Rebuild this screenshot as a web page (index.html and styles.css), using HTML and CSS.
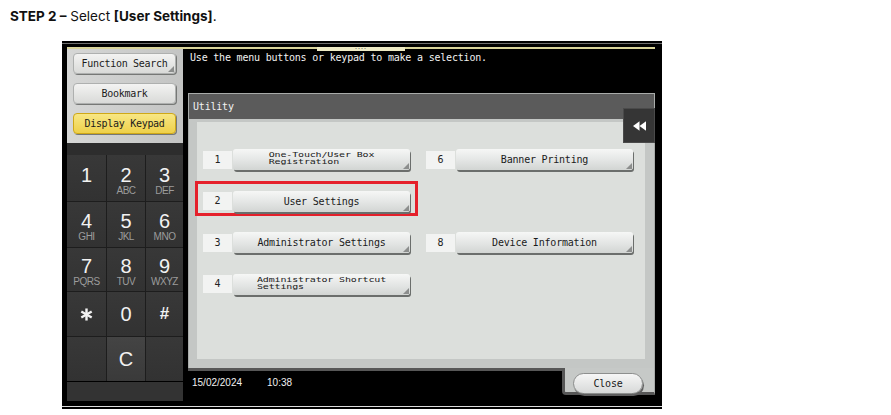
FILE: index.html
```html
<!DOCTYPE html>
<html lang="en">
<head>
    <meta charset="UTF-8">
    <meta name="viewport" content="width=device-width, initial-scale=1.0">
    <title>Step 2 - User Settings</title>
    <link rel="stylesheet" href="styles.css">
</head>
<body>
<p class="step"><b>STEP 2 &ndash;</b> Select <b>[User Settings]</b>.</p>

<div class="screen">
    <div class="rail"><span class="rail-tab">&middot;&middot;&middot;&middot;</span></div>
    <div class="lcd">
        <!-- Left side: shortcut buttons and keypad -->
        <div class="side">
            <div class="side-top">
                <button class="soft corner">Function Search</button>
                <button class="soft">Bookmark</button>
                <button class="soft active">Display Keypad</button>
            </div>
            <div class="keypad">
                <div class="keys">
                    <div class="key lettered"><span class="d">1</span><span class="l">&nbsp;</span></div>
                    <div class="key lettered"><span class="d">2</span><span class="l">ABC</span></div>
                    <div class="key lettered"><span class="d">3</span><span class="l">DEF</span></div>
                    <div class="key lettered"><span class="d">4</span><span class="l">GHI</span></div>
                    <div class="key lettered"><span class="d">5</span><span class="l">JKL</span></div>
                    <div class="key lettered"><span class="d">6</span><span class="l">MNO</span></div>
                    <div class="key lettered"><span class="d">7</span><span class="l">PQRS</span></div>
                    <div class="key lettered"><span class="d">8</span><span class="l">TUV</span></div>
                    <div class="key lettered"><span class="d">9</span><span class="l">WXYZ</span></div>
                    <div class="key">
                        <svg width="13" height="13" viewBox="0 0 14 14">
                            <g stroke="#f2f2f2" stroke-width="2.6" stroke-linecap="butt">
                                <line x1="7" y1="0.5" x2="7" y2="13.5"/>
                                <line x1="1.4" y1="3.8" x2="12.6" y2="10.2"/>
                                <line x1="1.4" y1="10.2" x2="12.6" y2="3.8"/>
                            </g>
                        </svg>
                    </div>
                    <div class="key"><span class="d">0</span></div>
                    <div class="key"><span class="d hash">#</span></div>
                    <div class="key"></div>
                    <div class="key clear"><span class="d">C</span></div>
                    <div class="key"></div>
                </div>
            </div>
            <div class="side-foot"></div>
        </div>

        <!-- Main area: Utility menu -->
        <div class="main">
            <p class="msg">Use the menu buttons or keypad to make a selection.</p>
            <div class="panel">
                <div class="panel-title">Utility</div>
                <button class="back">
                    <svg width="13" height="10" viewBox="0 0 14 10">
                        <polygon points="7,0 0,5 7,10" fill="#fff"/>
                        <polygon points="14,0 7,5 14,10" fill="#fff"/>
                    </svg>
                </button>
                <div class="panel-body">
                    <div class="menu">
                        <div class="item"><span class="num">1</span><button class="mbtn"><span class="two">One-Touch/User Box<br>Registration</span></button></div>
                        <div class="item"><span class="num">6</span><button class="mbtn">Banner Printing</button></div>
                        <div class="item hl"><span class="num">2</span><button class="mbtn">User Settings</button></div>
                        <div></div>
                        <div class="item"><span class="num">3</span><button class="mbtn">Administrator Settings</button></div>
                        <div class="item"><span class="num">8</span><button class="mbtn">Device Information</button></div>
                        <div class="item"><span class="num">4</span><button class="mbtn"><span class="two">Administrator Shortcut<br>Settings</span></button></div>
                        <div></div>
                    </div>
                </div>
            </div>
            <div class="status">
                <div class="clock"><span>15/02/2024</span><span>10:38</span></div>
                <div class="close-tab"><button class="close">Close</button></div>
            </div>
        </div>
    </div>
</div>
</body>
</html>
```

FILE: styles.css
```css
body {
    margin: 0;
    background: #fff;
    font-family: Inter, "Liberation Sans", sans-serif;
    color: #111;
}
.step {
    margin: 0;
    padding: 9px 0 0 10px;
    font-size: 13.5px;
    line-height: 15px;
}
.step b {
    font-weight: 700;
}

/* Screenshot frame */
.screen {
    box-sizing: border-box;
    width: 600px;
    height: 368px;
    margin: 17px 0 0 62px;
    padding: 6px 7px 5px 5px;
    background: #000;
    box-shadow: inset 0 2px 0 #000, inset 0 3px 0 #6e6e6e,
                inset 0 -2px 0 #000, inset 0 -3px 0 #dcdcdc;
}
.rail {
    display: flex;
    height: 2px;
    background: #d9d49a;
}
.rail-tab {
    position: relative;
    margin-left: 250px;
    width: 88px;
    height: 4px;
    background: #eeeac4;
    color: #555;
    font-size: 7px;
    line-height: 3px;
    text-align: center;
    letter-spacing: 1px;
}
.lcd {
    display: flex;
    gap: 2px;
    height: 355px;
}

/* Left side */
.side {
    width: 116px;
    display: flex;
    flex-direction: column;
}
.side-top {
    height: 94px;
    box-sizing: border-box;
    padding: 4px 0 0 6px;
    display: flex;
    flex-direction: column;
    gap: 9px;
    background: linear-gradient(90deg, #d6d7d6, #c3c4c3);
}
.soft {
    position: relative;
    width: 103px;
    height: 21px;
    padding: 0;
    border: 1px solid #aeb0af;
    border-radius: 4px;
    background: linear-gradient(#f3f3f2, #d9dad8);
    box-shadow: 1px 1px 0 #767876;
    font-family: "DejaVu Sans Mono", "Liberation Mono", monospace;
    font-size: 10px;
    letter-spacing: -0.3px;
    color: #1b1b1b;
}
.soft.active {
    background: linear-gradient(#f8e784, #eed04a);
    border-color: #cfa817;
}
.corner::after,
.mbtn::after {
    content: "";
    position: absolute;
    right: 1px;
    bottom: 1px;
    border: 3px solid transparent;
    border-right-color: #8c8e8d;
    border-bottom-color: #8c8e8d;
}
.keypad {
    background: #2d2d2d;
    padding-top: 12px;
}
.keys {
    display: grid;
    grid-template-columns: 39px 38px 37px;
    grid-template-rows: 46px 45px 43px 44px 44px;
    gap: 1px;
    background: #1d1d1d;
}
.key {
    display: flex;
    flex-direction: column;
    align-items: center;
    justify-content: center;
    background: linear-gradient(#383838, #323232);
    font-family: "Liberation Sans", sans-serif;
    color: #f2f2f2;
}
.key.lettered {
    padding-top: 5px;
}
.key.clear {
    background: linear-gradient(#444, #3a3a3a);
}
.d {
    font-size: 20px;
    line-height: 18px;
}
.d.hash {
    font-size: 17px;
    font-weight: 700;
}
.l {
    margin-top: 2px;
    font-size: 10px;
    line-height: 10px;
    letter-spacing: -0.5px;
    color: #9c9c9c;
}
.side-foot {
    height: 19px;
    margin-top: 1px;
    background: #333;
}

/* Main area */
.main {
    width: 470px;
    display: flex;
    flex-direction: column;
}
.msg {
    height: 44px;
    box-sizing: border-box;
    margin: 0;
    padding: 3px 0 0 5px;
    font-family: "DejaVu Sans Mono", "Liberation Mono", monospace;
    font-size: 10px;
    line-height: 12px;
    letter-spacing: -0.2px;
    color: #f2f2f2;
}
.panel {
    position: relative;
    margin-left: 3px;
    border: 1px solid #a9acaa;
    border-bottom: none;
    background: #c4c7c5;
}
.panel-title {
    height: 25px;
    padding-left: 4px;
    background: #5b5b5b;
    font-family: "DejaVu Sans Mono", "Liberation Mono", monospace;
    font-size: 10px;
    line-height: 25px;
    letter-spacing: -0.2px;
    color: #f2f2f2;
}
.back {
    position: absolute;
    top: 14px;
    right: -1px;
    width: 32px;
    height: 35px;
    padding: 0;
    border: 1px solid #4a4a4a;
    background: #353535;
    display: flex;
    align-items: center;
    justify-content: center;
}
.panel-body {
    padding: 3px 9px 9px 8px;
}
.menu {
    height: 237px;
    box-sizing: border-box;
    padding: 27px 0 0 6px;
    background: #dcdfdc;
    display: grid;
    grid-template-columns: 207px 207px;
    grid-template-rows: repeat(4, 21px);
    column-gap: 16px;
    row-gap: 20.5px;
}
.item {
    position: relative;
    display: flex;
    align-items: center;
    gap: 1px;
}
.item.hl::before {
    content: "";
    position: absolute;
    top: -10px;
    left: -8px;
    right: -8px;
    bottom: -4px;
    border: 3px solid #e5202b;
}
.num {
    width: 29px;
    height: 18px;
    background: #f2f3f2;
    font-family: "DejaVu Sans Mono", "Liberation Mono", monospace;
    font-size: 10px;
    line-height: 18px;
    text-align: center;
    color: #222;
}
.mbtn {
    position: relative;
    width: 177px;
    height: 21px;
    padding: 0;
    border: none;
    border-radius: 3px;
    background: linear-gradient(#f6f7f6, #e3e5e4 55%, #d2d5d3);
    box-shadow: 1px 2px 0 #6b6e6c;
    font-family: "DejaVu Sans Mono", "Liberation Mono", monospace;
    font-size: 10px;
    letter-spacing: -0.2px;
    color: #1a1a1a;
}
.two {
    display: inline-block;
    text-align: left;
    font-size: 10px;
    line-height: 9px;
    letter-spacing: -0.15px;
    transform: translateY(-1px) scaleY(0.72);
}

/* Bottom status line */
.status {
    display: flex;
    margin-left: 3px;
    height: 36px;
}
.clock {
    flex: 1;
    display: flex;
    gap: 25px;
    padding: 6px 0 0 4px;
    border-top: 3px solid #575757;
    font-family: "Liberation Sans", sans-serif;
    font-size: 10px;
    line-height: 12px;
    color: #f0f0f0;
}
.close-tab {
    box-sizing: border-box;
    width: 93px;
    height: 27px;
    padding: 3px 0 0 8px;
    background: #c6c9c7;
    border-left: 3px solid #575757;
    border-bottom: 3px solid #575757;
    border-right: 1px solid #a9acaa;
    border-bottom-left-radius: 4px;
}
.close {
    width: 70px;
    height: 21px;
    padding: 0;
    border: 1px solid #8d8f8e;
    border-radius: 11px;
    background: linear-gradient(#f6f6f6, #d7d9d8);
    box-shadow: 1px 2px 0 #5e5e5e;
    font-family: "DejaVu Sans Mono", "Liberation Mono", monospace;
    font-size: 10px;
    letter-spacing: -0.2px;
    color: #1a1a1a;
}
```
